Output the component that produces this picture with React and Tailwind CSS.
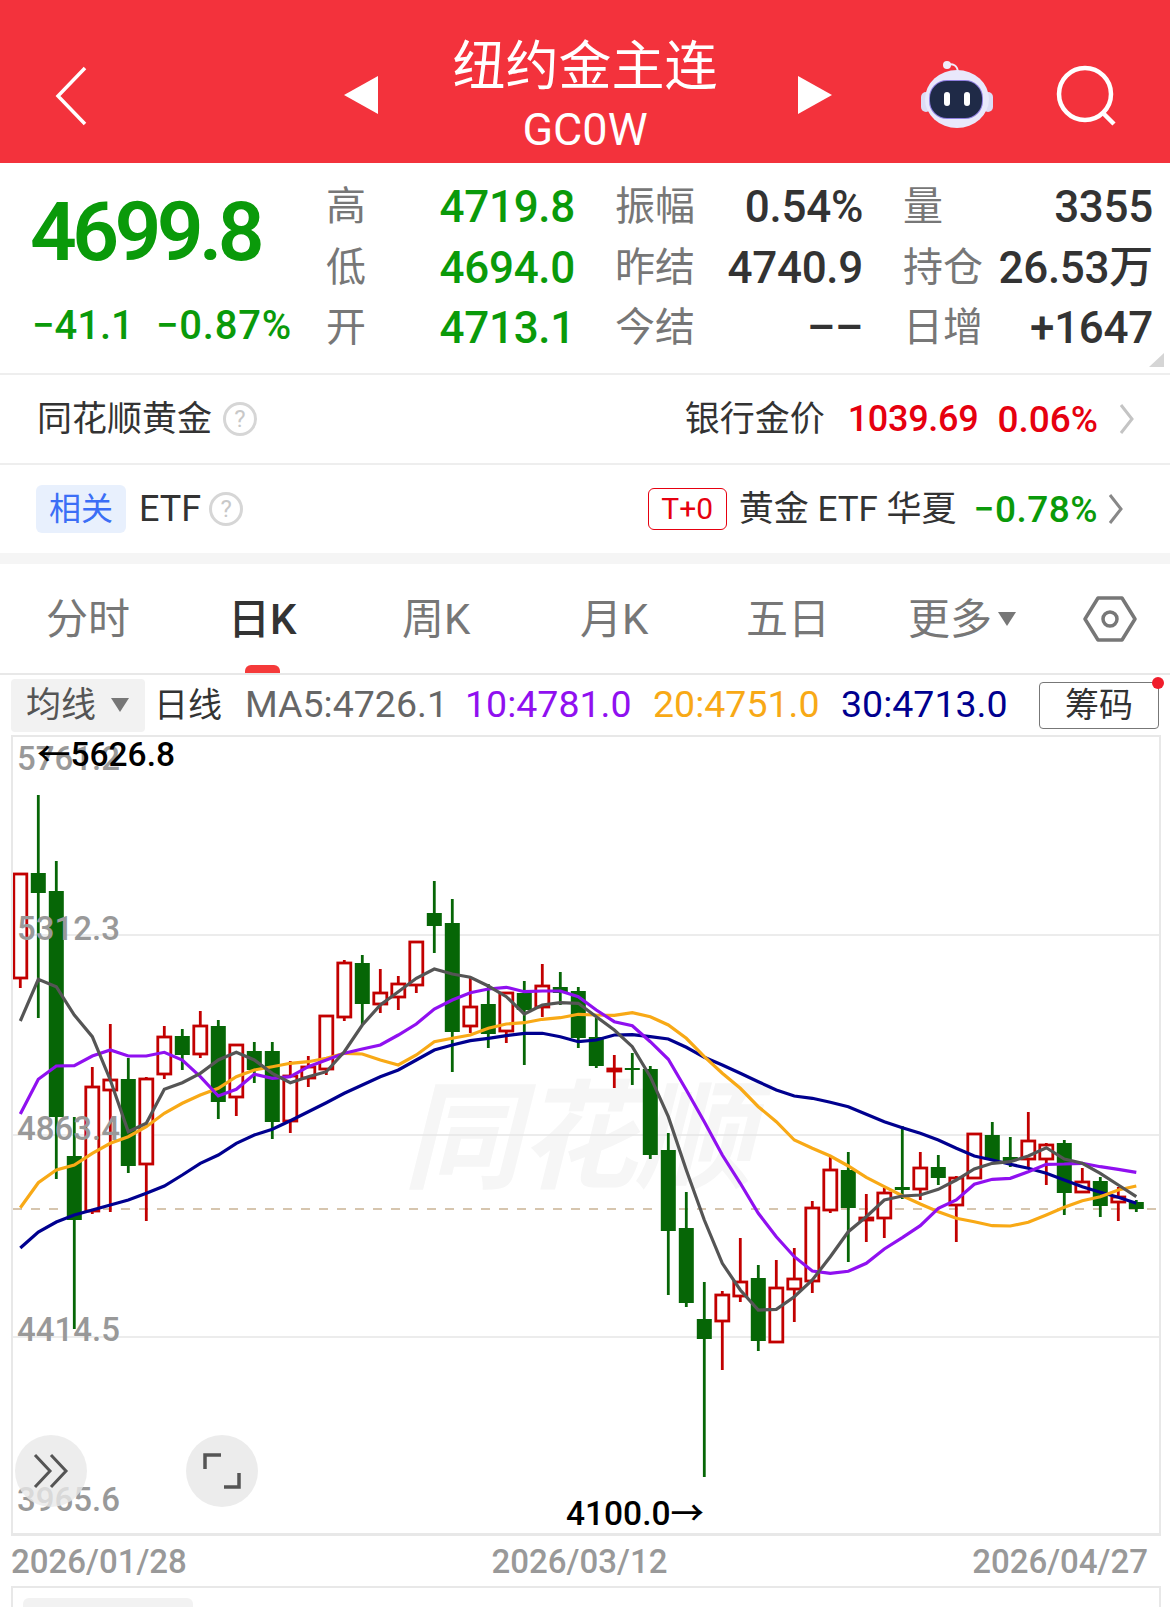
import React from 'react';

const GREEN = '#066606';
const RED = '#c20000';

// [open-top, body-bottom, wick-top, wick-bottom, color]
const candles = [
    [874, 978, 874, 988, 'r'], [873, 893, 795, 1018, 'g'], [891, 1117, 861, 1179, 'g'], [1156, 1220, 1117, 1329, 'g'],
    [1087, 1211, 1067, 1214, 'r'], [1080, 1090, 1024, 1212, 'r'], [1079, 1166, 1058, 1173, 'g'], [1079, 1164, 1077, 1221, 'r'],
    [1037, 1074, 1026, 1079, 'r'], [1036, 1055, 1029, 1070, 'g'], [1026, 1054, 1011, 1058, 'r'], [1026, 1102, 1020, 1119, 'g'],
    [1045, 1097, 1044, 1116, 'r'], [1051, 1070, 1042, 1083, 'g'], [1051, 1122, 1042, 1139, 'g'], [1076, 1121, 1061, 1133, 'r'],
    [1067, 1078, 1056, 1087, 'r'], [1016, 1069, 1016, 1075, 'r'], [963, 1017, 960, 1021, 'r'], [963, 1004, 955, 1025, 'g'],
    [993, 1004, 969, 1013, 'r'], [984, 997, 976, 1010, 'r'], [942, 985, 942, 993, 'r'], [913, 926, 881, 953, 'g'],
    [923, 1032, 899, 1072, 'g'], [1007, 1026, 978, 1033, 'r'], [1004, 1034, 984, 1048, 'g'], [993, 1031, 992, 1043, 'r'],
    [993, 1010, 981, 1065, 'g'], [986, 1007, 964, 1017, 'r'], [987, 993, 972, 1005, 'g'], [991, 1038, 987, 1048, 'g'],
    [1037, 1066, 1018, 1068, 'g'], [1069, 1071, 1055, 1088, 'r'], [1068, 1070, 1053, 1085, 'g'], [1069, 1155, 1066, 1159, 'g'],
    [1150, 1231, 1133, 1295, 'g'], [1228, 1303, 1192, 1307, 'g'], [1319, 1339, 1282, 1477, 'g'], [1295, 1321, 1291, 1370, 'r'],
    [1282, 1296, 1238, 1302, 'r'], [1278, 1341, 1265, 1351, 'g'], [1288, 1342, 1260, 1343, 'r'], [1279, 1289, 1248, 1322, 'r'],
    [1208, 1281, 1201, 1293, 'r'], [1170, 1210, 1155, 1213, 'r'], [1170, 1208, 1152, 1262, 'g'], [1218, 1220, 1194, 1242, 'r'],
    [1193, 1218, 1188, 1238, 'r'], [1187, 1190, 1126, 1199, 'g'], [1168, 1189, 1152, 1200, 'r'], [1167, 1178, 1155, 1185, 'g'],
    [1178, 1205, 1176, 1242, 'r'], [1134, 1178, 1133, 1178, 'r'], [1135, 1160, 1122, 1160, 'g'], [1157, 1161, 1137, 1167, 'g'],
    [1141, 1159, 1112, 1168, 'r'], [1145, 1159, 1143, 1185, 'r'], [1143, 1193, 1140, 1215, 'g'], [1182, 1192, 1168, 1193, 'r'],
    [1181, 1206, 1177, 1217, 'g'], [1197, 1202, 1187, 1221, 'r'], [1202, 1209, 1200, 1212, 'g'],
];

const series = (a, b, c) => [
    ...a.map(y => 730 + y / 3),
    ...b.map(y => 860 + y / 3),
    ...c.map(y => 1080 + y / 3),
];

const ma5 = series(
    [873, 748, 770, 855, 920, 1050, 1205, 1180, 1078, 1058, 1030, 990, 967, 990, 1030, 1058, 1040, 1025, 965, 885, 825],
    [395, 355, 327, 342, 352, 378, 410, 462, 435, 428, 430, 470, 510, 560, 650, 770, 930, 1080, 1210, 1290, 1350],
    [688, 650, 600, 530, 455, 410, 360, 348, 345, 328, 300, 267, 250, 245, 228, 203, 237, 250, 280, 315, 350],
);
const ma10 = series(
    [1152, 1048, 1008, 1007, 978, 960, 978, 978, 967, 990, 1040, 1098, 1078, 1033, 1045, 1040, 1010, 990, 970, 957, 945],
    [525, 492, 447, 420, 398, 387, 382, 395, 393, 393, 410, 450, 485, 497, 545, 598, 690, 785, 885, 970, 1060],
    [470, 530, 573, 580, 574, 550, 507, 473, 437, 385, 360, 313, 298, 295, 275, 253, 252, 250, 260, 268, 277],
);
const ma20 = series(
    [1433, 1358, 1320, 1305, 1270, 1240, 1220, 1190, 1150, 1120, 1095, 1075, 1040, 1020, 1010, 1000, 995, 985, 970, 972, 990],
    [615, 585, 545, 535, 525, 505, 492, 488, 478, 473, 463, 465, 466, 458, 470, 495, 535, 590, 640, 685, 740],
    [125, 180, 205, 228, 258, 292, 320, 347, 372, 395, 415, 425, 437, 438, 427, 405, 382, 362, 350, 330, 318],
);
const ma30 = series(
    [1554, 1506, 1476, 1455, 1440, 1425, 1410, 1390, 1368, 1335, 1300, 1275, 1240, 1215, 1198, 1172, 1145, 1118, 1090, 1065, 1040],
    [630, 600, 570, 555, 542, 535, 527, 520, 520, 530, 545, 540, 525, 524, 530, 537, 562, 592, 615, 640, 665],
    [30, 48, 55, 67, 80, 103, 125, 143, 160, 180, 205, 228, 240, 253, 265, 280, 300, 320, 337, 352, 370],
);

const cx = i => 19.3 + i * 18;
const toPoints = ys => ys.map((y, i) => `${cx(i).toFixed(1)},${y.toFixed(1)}`).join(' ');

function Candle({c, i}) {
    const [top, bottom, wickTop, wickBottom, kind] = c;
    const x = cx(i);
    if (kind === 'g') {
        return (
            <g>
                <line x1={x} x2={x} y1={wickTop} y2={wickBottom} stroke={GREEN} strokeWidth="2.8"/>
                <rect x={x - 7.5} y={top} width="15" height={bottom - top} fill={GREEN}/>
            </g>
        );
    }
    return (
        <g>
            <line x1={x} x2={x} y1={wickTop} y2={wickBottom} stroke={RED} strokeWidth="2.8"/>
            <rect x={x - 6.5} y={top} width="13" height={bottom - top} fill="#fff" stroke={RED} strokeWidth="2.8"/>
        </g>
    );
}

function KChart() {
    return (
        <svg className="block w-[1146px] h-[796px]" viewBox="12 737 1146 796">
            {[935, 1135, 1337].map(y => (
                <line key={y} x1="12" x2="1158" y1={y} y2={y} stroke="#e6e6e6" strokeWidth="1.5"/>
            ))}
            <line x1="12" x2="1158" y1="1209" y2="1209" stroke="#c9b294" strokeWidth="1.5" strokeDasharray="9 9"/>
            {candles.map((c, i) => <Candle key={i} c={c} i={i}/>)}
            <polyline points={toPoints(ma30)} fill="none" stroke="#00008f" strokeWidth="3.2"/>
            <polyline points={toPoints(ma20)} fill="none" stroke="#f8a916" strokeWidth="3.2"/>
            <polyline points={toPoints(ma10)} fill="none" stroke="#9010f0" strokeWidth="3.2"/>
            <polyline points={toPoints(ma5)} fill="none" stroke="#555555" strokeWidth="3.2"/>
        </svg>
    );
}

function Robot() {
    return (
        <svg width="78" height="72" viewBox="918 60 78 72" className="block">
            <path d="M946 65 Q957 62 958 72" fill="none" stroke="#f0eefc" strokeWidth="2"/>
            <circle cx="947" cy="65" r="4" fill="#f0eefc"/>
            <rect x="921" y="92" width="10" height="20" rx="5" fill="#dcdcf5"/>
            <rect x="983" y="92" width="10" height="20" rx="5" fill="#dcdcf5"/>
            <ellipse cx="957" cy="99" rx="32" ry="29" fill="#e9e8fb"/>
            <rect x="929" y="80" width="54" height="39" rx="18" fill="#8f7fe0"/>
            <rect x="930" y="81" width="52" height="37" rx="17" fill="#1f2a47"/>
            <rect x="944" y="92" width="6" height="14" rx="3" fill="#fff"/>
            <rect x="964" y="92" width="6" height="14" rx="3" fill="#fff"/>
        </svg>
    );
}

function Help({size = 34}) {
    return (
        <span className="flex items-center justify-center rounded-full border-[3px] border-[#d6d6d6] text-[#c8c8c8] text-[24px] leading-none"
              style={{width: size, height: size}}>?</span>
    );
}

function Chevron({color}) {
    return (
        <svg width="16" height="34" viewBox="0 0 16 34" className="block">
            <path d="M2 3 L13 17 L2 31" fill="none" stroke={color} strokeWidth="3"/>
        </svg>
    );
}

function Stat({label, value, className = 'text-[#333]'}) {
    return (
        <div className="flex items-center justify-between h-[60.5px]">
            <span className="text-[40px] leading-none text-[#777]">{label}</span>
            <span className={'text-[44px] leading-none font-medium tracking-[-0.3px] ' + className}>{value}</span>
        </div>
    );
}

function Tab({children, className = 'text-[#777]'}) {
    return <span className={'absolute top-[32px] text-[42px] leading-[48px] ' + className}>{children}</span>;
}

function AxisLabel({className, children}) {
    return <span className={'absolute text-[33px] leading-none font-medium text-[#999] ' + className}>{children}</span>;
}

export default function App() {
    return (
        <div className="w-[1170px] h-[1607px] overflow-hidden bg-white font-['Roboto','Noto_Sans_CJK_SC',sans-serif]">
            {/* header */}
            <div className="flex items-start h-[163px] bg-[#f3323c] text-white">
                <svg width="34" height="60" viewBox="0 0 34 60" className="mt-[66px] ml-[54px] shrink-0">
                    <path d="M31 2 L4 30 L31 58" fill="none" stroke="#fff" strokeWidth="3.5"/>
                </svg>
                <svg width="34" height="38" viewBox="0 0 34 38" className="mt-[76px] ml-[256px] shrink-0">
                    <path d="M34 0 V38 L0 19 Z" fill="#fff"/>
                </svg>
                <div className="w-[420px] shrink-0 flex flex-col items-center pt-[37px] pr-[6px]">
                    <div className="text-[53px] leading-[60px]">纽约金主连</div>
                    <div className="text-[45px] leading-[48px] mt-[9px]">GC0W</div>
                </div>
                <svg width="34" height="38" viewBox="0 0 34 38" className="mt-[76px] shrink-0">
                    <path d="M0 0 V38 L34 19 Z" fill="#fff"/>
                </svg>
                <div className="mt-[60px] ml-[86px] shrink-0"><Robot/></div>
                <svg width="62" height="62" viewBox="0 0 62 62" className="mt-[64px] ml-[60px] shrink-0">
                    <circle cx="29" cy="30" r="26" fill="none" stroke="#fff" strokeWidth="4.5"/>
                    <path d="M47 49 L58 60" stroke="#fff" strokeWidth="4.5"/>
                </svg>
            </div>

            {/* quote */}
            <div className="relative flex h-[212px] border-b-[2px] border-[#eeeeee]">
                <div className="w-[326px] shrink-0 pl-[30px] text-[#0a9a0a]">
                    <div className="text-[82px] leading-[84px] font-semibold tracking-[-4.6px] mt-[27px]">4699.8</div>
                    <div className="flex text-[40px] leading-[44px] font-medium mt-[30px]">
                        <span className="w-[126px] pl-[2px]">−41.1</span>
                        <span className="tracking-[0.8px]">−0.87%</span>
                    </div>
                </div>
                <div className="grid grid-cols-[249px_248px_250px] gap-x-[40px] pt-[14px] h-fit">
                    <Stat label="高" value="4719.8" className="text-[#0a9a0a]"/>
                    <Stat label="振幅" value="0.54%"/>
                    <Stat label="量" value="3355"/>
                    <Stat label="低" value="4694.0" className="text-[#0a9a0a]"/>
                    <Stat label="昨结" value="4740.9"/>
                    <Stat label="持仓" value="26.53万"/>
                    <Stat label="开" value="4713.1" className="text-[#0a9a0a]"/>
                    <Stat label="今结" value="––"/>
                    <Stat label="日增" value="+1647"/>
                </div>
                <svg width="15" height="14" viewBox="0 0 15 14" className="absolute right-[6px] bottom-[6px]">
                    <path d="M15 0 V14 H0 Z" fill="#d5d5d5"/>
                </svg>
            </div>

            {/* gold row */}
            <div className="flex items-center h-[90px] pl-[37px] border-b-[2px] border-[#eeeeee]">
                <span className="text-[35px] leading-none text-[#333] mr-[11px]">同花顺黄金</span>
                <Help/>
                <span className="ml-auto text-[35px] leading-none text-[#333]">银行金价</span>
                <span className="ml-[23px] text-[36px] leading-none font-medium tracking-[-0.3px] text-[#e6000f]">1039.69</span>
                <span className="ml-[19px] text-[37px] leading-none font-medium text-[#e6000f]">0.06%</span>
                <span className="ml-[21px] mr-[35px]"><Chevron color="#c4c4c4"/></span>
            </div>

            {/* etf row */}
            <div className="flex items-center h-[88px] pl-[36px]">
                <span className="flex items-center justify-center w-[90px] h-[48px] rounded-md bg-[#e8f0fd] text-[#3b6ef6] text-[32px] leading-none">相关</span>
                <span className="ml-[13px] mr-[8px] text-[36px] leading-none text-[#333]">ETF</span>
                <Help/>
                <span className="ml-auto flex items-center justify-center w-[79px] h-[42px] rounded-md border border-[#e6000f] text-[#e6000f] text-[30px] leading-none">T+0</span>
                <span className="ml-[12px] text-[35px] leading-none text-[#333]">黄金 ETF 华夏</span>
                <span className="ml-[17px] text-[37px] leading-none font-medium tracking-[0.5px] text-[#0a9a0a]">−0.78%</span>
                <span className="ml-[10px] mr-[46px]"><Chevron color="#888888"/></span>
            </div>

            {/* spacer band */}
            <div className="h-[11px] bg-[#f5f5f5]"/>

            {/* tabs */}
            <div className="relative h-[111px] border-b-[2px] border-[#e8e8e8]">
                <Tab className="text-[#777] left-[46px]">分时</Tab>
                <Tab className="text-[#333] font-medium left-[228px]">日K</Tab>
                <Tab className="text-[#777] left-[402px]">周K</Tab>
                <Tab className="text-[#777] left-[580px]">月K</Tab>
                <Tab className="text-[#777] left-[746px]">五日</Tab>
                <Tab className="text-[#777] left-[908px]">更多</Tab>
                <svg width="18" height="14" viewBox="0 0 18 14" className="absolute left-[998px] top-[48px]">
                    <path d="M0 0 H18 L9 14 Z" fill="#777"/>
                </svg>
                <svg width="54" height="46" viewBox="0 0 54 46" className="absolute left-[1083px] top-[32px]">
                    <path d="M15 2 H39 L52 23 L39 44 H15 L2 23 Z" fill="none" stroke="#777" strokeWidth="3.5" strokeLinejoin="round"/>
                    <circle cx="27" cy="23" r="7" fill="none" stroke="#777" strokeWidth="3.5"/>
                </svg>
                <div className="absolute left-[245px] bottom-0 w-[35px] h-[8px] rounded-t-md bg-[#f53a3a]"/>
            </div>

            {/* ma toolbar */}
            <div className="flex items-center h-[60px] pl-[11px] text-[37.5px] leading-none">
                <span className="flex items-center justify-between w-[134px] h-[53px] pl-[15px] pr-[16px] rounded bg-[#f2f2f2] text-[35px] text-[#555]">
                    均线
                    <svg width="18" height="14" viewBox="0 0 18 14"><path d="M0 0 H18 L9 14 Z" fill="#777"/></svg>
                </span>
                <span className="ml-[9px] w-[68px] text-[#333] text-[34px]">日线</span>
                <span className="ml-[23px] w-[201px] text-[#666]">MA5:4726.1</span>
                <span className="ml-[19px] w-[162px] text-[#9010f0]">10:4781.0</span>
                <span className="ml-[26px] w-[166px] text-[#f8a916]">20:4751.0</span>
                <span className="ml-[22px] w-[166px] text-[#00008f]">30:4713.0</span>
                <span className="relative flex items-center justify-center w-[120px] h-[47px] ml-[32px] rounded border border-[#777] text-[34px] text-[#333]">
                    筹码
                    <span className="absolute -right-[6px] -top-[6px] w-[12px] h-[12px] rounded-full bg-[#f01d2b]"/>
                </span>
            </div>

            {/* chart */}
            <div className="relative w-[1150px] ml-[11px] border-2 border-b-[3px] border-[#e8e8e8]">
                <span className="absolute left-[390px] top-[343px] text-[118px] leading-none font-bold italic tracking-[-2px] text-[#f6f6f6] whitespace-nowrap">同花顺</span>
                <div className="relative"><KChart/></div>
                <AxisLabel className="left-[4px] top-[5px]">5761.2</AxisLabel>
                <span className="absolute left-[24px] top-[1px] text-[33.5px] leading-none font-medium text-black">←5626.8</span>
                <AxisLabel className="left-[4px] top-[175px]">5312.3</AxisLabel>
                <AxisLabel className="left-[4px] top-[375px]">4863.4</AxisLabel>
                <AxisLabel className="left-[4px] top-[576px]">4414.5</AxisLabel>
                <AxisLabel className="left-[4px] top-[746px]">3965.6</AxisLabel>
                <span className="absolute left-[553px] top-[760px] text-[33.5px] leading-none font-medium text-black">4100.0→</span>
                <div className="absolute left-[2px] top-[698px] flex items-center justify-center w-[72px] h-[72px] rounded-full bg-[#e9e9e9]/80">
                    <svg width="38" height="36" viewBox="0 0 38 36">
                        <path d="M3 2 L18 18 L3 34 M19 2 L34 18 L19 34" fill="none" stroke="#555" strokeWidth="3"/>
                    </svg>
                </div>
                <div className="absolute left-[173px] top-[698px] flex items-center justify-center w-[72px] h-[72px] rounded-full bg-[#ececec]">
                    <svg width="38" height="36" viewBox="0 0 38 36">
                        <path d="M2 16 V2 H18 M36 20 V34 H21" fill="none" stroke="#555" strokeWidth="3.5"/>
                    </svg>
                </div>
            </div>

            {/* dates */}
            <div className="flex justify-between w-[1150px] ml-[11px] pr-[13px] h-[50px] items-center text-[33px] leading-none font-medium text-[#999]">
                <span>2026/01/28</span>
                <span>2026/03/12</span>
                <span>2026/04/27</span>
            </div>

            {/* next panel */}
            <div className="w-[1150px] h-[60px] ml-[11px] border-2 border-[#e8e8e8] pl-[10px] pt-[10px]">
                <div className="w-[170px] h-[50px] rounded-t-md bg-[#f2f2f2]"/>
            </div>
        </div>
    );
}
